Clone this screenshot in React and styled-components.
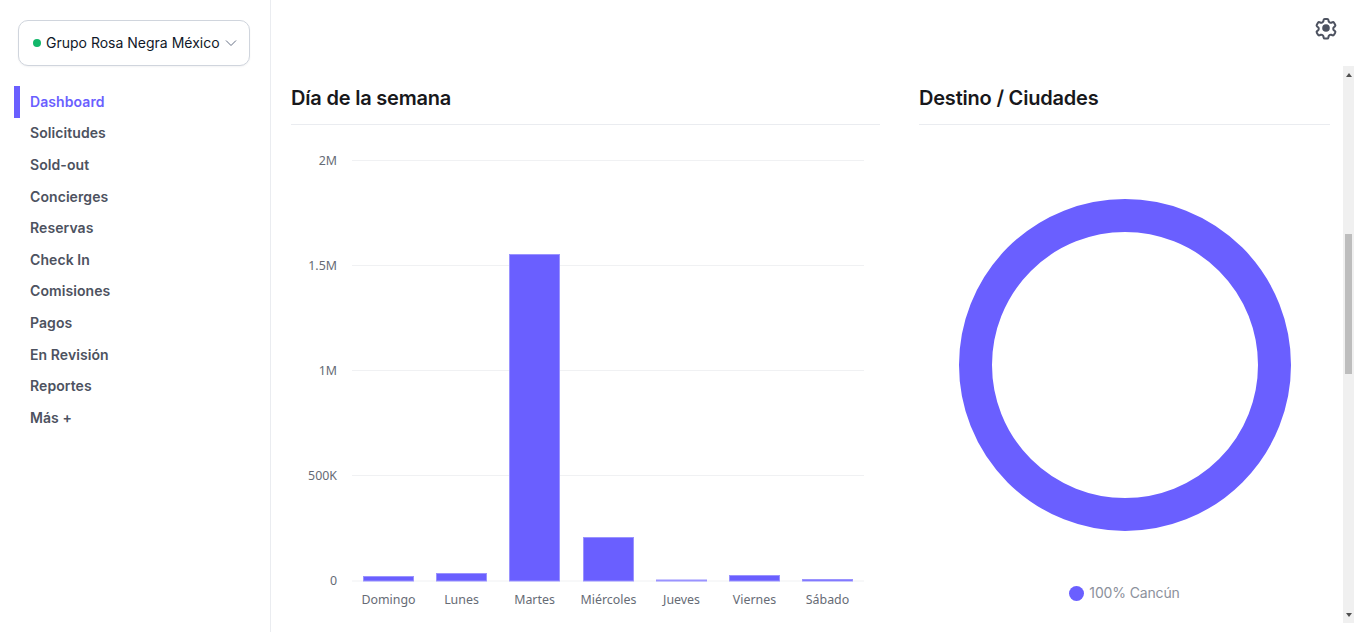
import styled, { createGlobalStyle } from "styled-components";

const NAV_ITEMS = [
  "Dashboard",
  "Solicitudes",
  "Sold-out",
  "Concierges",
  "Reservas",
  "Check In",
  "Comisiones",
  "Pagos",
  "En Revisión",
  "Reportes",
  "Más +",
];

const TICKS = [
  { label: "2M", y: 160.5 },
  { label: "1.5M", y: 265.5 },
  { label: "1M", y: 370.5 },
  { label: "500K", y: 475.5 },
  { label: "0", y: 581 },
];

const BARS = [
  { label: "Domingo", x: 72, top: 576.5 },
  { label: "Lunes", x: 145, top: 573.5 },
  { label: "Martes", x: 218, top: 254.5 },
  { label: "Miércoles", x: 292, top: 537.5 },
  { label: "Jueves", x: 365, top: 580 },
  { label: "Viernes", x: 438, top: 575.5 },
  { label: "Sábado", x: 511, top: 579.5 },
];

const GlobalStyle = createGlobalStyle`
  html, body {
    margin: 0;
    height: 100%;
    background: #fff;
    overflow: hidden;
    font-family: Inter, "Liberation Sans", sans-serif;
  }
`;

const Page = styled.div`
  display: flex;
  width: 1354px;
  height: 632px;
`;

const Sidebar = styled.aside`
  flex: none;
  width: 256px;
  padding: 20px 0 0 14px;
  border-right: 1px solid #eaecf0;
`;

const CompanyButton = styled.button`
  display: flex;
  align-items: center;
  box-sizing: border-box;
  width: 232px;
  height: 46px;
  margin: 0 0 20px 4px;
  padding: 0 0 1px 14px;
  background: #fff;
  border: 1px solid #d0d5dd;
  border-radius: 10px;
  box-shadow: 0 1px 2px rgba(16, 24, 40, 0.05);
  font: 400 14px Inter, sans-serif;
  color: #101828;
`;

const StatusDot = styled.span`
  width: 8px;
  height: 8px;
  margin-right: 5px;
  border-radius: 50%;
  background: #12b76a;
`;

const Chevron = styled.svg`
  width: 12px;
  height: 12px;
  margin-left: 5px;
  color: #667085;
`;

const NavList = styled.nav`
  display: flex;
  flex-direction: column;
`;

const NavItem = styled.a`
  display: flex;
  align-items: center;
  box-sizing: border-box;
  height: 31.6px;
  padding: 0 0 1px 10px;
  border-left: 6px solid ${(p) => (p.$active ? "#6a5fff" : "transparent")};
  font-size: 14px;
  font-weight: 600;
  letter-spacing: 0.08px;
  color: ${(p) => (p.$active ? "#6a5fff" : "#4d5260")};
`;

const Main = styled.main`
  flex: 1;
  display: flex;
  flex-direction: column;
  min-width: 0;
`;

const TopBar = styled.header`
  flex: none;
  display: flex;
  justify-content: flex-end;
  height: 66px;
  padding: 16px 16px 0 0;
  box-sizing: border-box;
`;

const GearIcon = styled.svg`
  width: 24px;
  height: 24px;
  color: #4d5260;
`;

const Body = styled.div`
  flex: none;
  display: flex;
  height: 557px;
`;

const Content = styled.div`
  flex: 1;
  display: grid;
  grid-template-columns: 589px 411px;
  column-gap: 39px;
  padding-left: 20px;
  align-content: start;
`;

const Panel = styled.section`
  display: flex;
  flex-direction: column;
`;

const PanelTitle = styled.h2`
  margin: 0;
  height: 59px;
  box-sizing: border-box;
  padding-top: 20px;
  border-bottom: 1px solid #eaecf0;
  font-size: 20px;
  line-height: 24px;
  font-weight: 600;
  letter-spacing: -0.2px;
  color: #18181b;
`;

const BarChart = styled.svg`
  display: block;
  width: 589px;
  height: 498px;
  font-family: "Noto Sans", sans-serif;
  font-size: 12.4px;
  fill: #666b75;
`;

const DonutWrap = styled.div`
  display: flex;
  flex-direction: column;
  align-items: center;
  padding-top: 74px;
`;

const Donut = styled.svg`
  display: block;
  width: 332px;
  height: 332px;
`;

const Legend = styled.div`
  display: flex;
  align-items: center;
  gap: 5px;
  margin-top: 53px;
  font-size: 14px;
  line-height: 18px;
  letter-spacing: -0.15px;
  color: #8c919c;
`;

const LegendDot = styled.span`
  width: 15px;
  height: 15px;
  border-radius: 50%;
  background: #6a5fff;
`;

const ScrollTrack = styled.div`
  flex: none;
  display: flex;
  flex-direction: column;
  align-items: center;
  width: 11px;
  background: #f0f0f0;
`;

const ScrollArrow = styled.span`
  flex: none;
  height: 17px;
  display: flex;
  justify-content: center;
  align-items: center;
  &::before {
    content: "";
    border-left: 3.5px solid transparent;
    border-right: 3.5px solid transparent;
    ${(p) => (p.$down ? "border-top" : "border-bottom")}: 4px solid #505050;
  }
`;

const ScrollThumb = styled.span`
  flex: none;
  width: 7px;
  height: 140px;
  margin-top: 151px;
  background: #bdbdbd;
`;

const ScrollSpacer = styled.span`
  flex: 1;
`;

export default function App() {
  return (
    <Page>
      <GlobalStyle />
      <Sidebar>
        <CompanyButton>
          <StatusDot />
          Grupo Rosa Negra México
          <Chevron viewBox="0 0 12 12" fill="none" stroke="currentColor" strokeWidth="1">
            <path d="M1 3.5l5 5 5-5" />
          </Chevron>
        </CompanyButton>
        <NavList>
          {NAV_ITEMS.map((item, i) => (
            <NavItem key={item} $active={i === 0}>
              {item}
            </NavItem>
          ))}
        </NavList>
      </Sidebar>
      <Main>
        <TopBar>
          <GearIcon viewBox="0 0 24 24" fill="none" stroke="currentColor" strokeWidth="2" strokeLinejoin="round">
            <path d="M9.6 3.9c.1-.6.6-1 1.2-1h2.4c.6 0 1.1.4 1.2 1l.2 1.4c.1.4.4.7.7.9l.7.4c.4.2.8.2 1.2.1l1.3-.5c.6-.2 1.2 0 1.5.5l1.2 2.1c.3.5.2 1.2-.3 1.6l-1.1.9c-.3.2-.5.6-.5 1v.9c0 .4.2.8.5 1l1.1.9c.5.4.6 1.1.3 1.6l-1.2 2.1c-.3.5-.9.7-1.5.5l-1.3-.5c-.4-.1-.8-.1-1.2.1l-.7.4c-.3.2-.6.5-.7.9l-.2 1.4c-.1.6-.6 1-1.2 1h-2.4c-.6 0-1.1-.4-1.2-1l-.2-1.4c-.1-.4-.4-.7-.7-.9l-.7-.4c-.4-.2-.8-.2-1.2-.1l-1.3.5c-.6.2-1.2 0-1.5-.5l-1.2-2.1c-.3-.5-.2-1.2.3-1.6l1.1-.9c.3-.2.5-.6.5-1v-.9c0-.4-.2-.8-.5-1l-1.1-.9c-.5-.4-.6-1.1-.3-1.6l1.2-2.1c.3-.5.9-.7 1.5-.5l1.3.5c.4.1.8.1 1.2-.1l.7-.4c.3-.2.6-.5.7-.9z" />
            <circle cx="12" cy="12" r="3.8" fill="currentColor" stroke="none" />
          </GearIcon>
        </TopBar>
        <Body>
          <Content>
            <Panel>
              <PanelTitle>Día de la semana</PanelTitle>
              <BarChart viewBox="291 125 589 498">
                {TICKS.map((t) => (
                  <g key={t.label}>
                    <line x1="352" x2="864" y1={t.y} y2={t.y} stroke="#f0f1f3" />
                    <text x="337" y={t.y + 4} textAnchor="end">
                      {t.label}
                    </text>
                  </g>
                ))}
                {BARS.map((b) => (
                  <g key={b.label}>
                    <rect
                      x={b.x + 291.5}
                      y={b.top}
                      width="50"
                      height={581 - b.top}
                      fill="#6a5fff"
                      stroke="#9a93ff"
                    />
                    <text x={b.x + 316.5} y="604" textAnchor="middle">
                      {b.label}
                    </text>
                  </g>
                ))}
              </BarChart>
            </Panel>
            <Panel>
              <PanelTitle>Destino / Ciudades</PanelTitle>
              <DonutWrap>
                <Donut viewBox="0 0 332 332">
                  <circle cx="166" cy="166" r="149.5" fill="none" stroke="#6a5fff" strokeWidth="33" />
                </Donut>
                <Legend>
                  <LegendDot />
                  100% Cancún
                </Legend>
              </DonutWrap>
            </Panel>
          </Content>
          <ScrollTrack>
            <ScrollArrow />
            <ScrollThumb />
            <ScrollSpacer />
            <ScrollArrow $down />
          </ScrollTrack>
        </Body>
      </Main>
    </Page>
  );
}
